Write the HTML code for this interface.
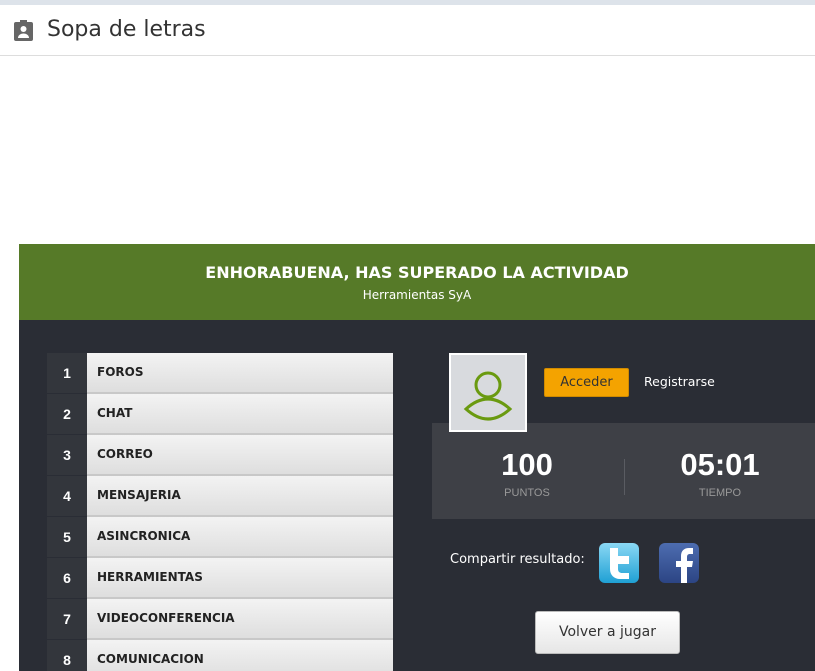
<!DOCTYPE html>
<html style="overflow:hidden;width:815px;height:671px"><head><meta charset="utf-8"><style>
*{margin:0;padding:0;box-sizing:border-box}
body{width:815px;height:671px;overflow:hidden;background:#fff;font-family:"DejaVu Sans","Liberation Sans",sans-serif;position:relative}
.top{position:absolute;left:0;top:0;width:815px;height:5px;background:#dde3ea}
.hdr{position:absolute;left:0;top:5px;width:815px;height:51px;border-bottom:1px solid #ddd;background:#fff}
.hdr span{position:absolute;left:47px;top:12px;font-size:22px;color:#333}
.green{position:absolute;left:19px;top:244px;width:796px;height:76px;background:#567a28;color:#fff;text-align:center}
.green h1{font-size:16px;font-weight:bold;margin-top:19px}
.green p{font-size:12px;margin-top:6px}
.dark{position:absolute;left:19px;top:320px;width:796px;height:351px;background:#2a2d35}
.row{position:absolute;left:47px;width:346px;height:41px}
.num{position:absolute;left:0;top:0;width:40px;height:41px;background:#33363c;color:#fff;font:bold 14px "Liberation Sans",sans-serif;text-align:center;line-height:41px;border-bottom:1px solid #2a2d35}
.txt{position:absolute;left:40px;top:0;width:306px;height:41px;background:linear-gradient(#f3f3f3,#dedede);border-bottom:2px solid #c8c8c8;font:bold 12px "DejaVu Sans",sans-serif;color:#222;line-height:39px;padding-left:10px}
.av{position:absolute;left:449px;top:353px;width:78px;height:79px;background:#d8dade;border:2px solid #fff}
.acc{position:absolute;left:544px;top:368px;width:85px;height:29px;background:#f4a300;border:1px solid #d08a00;border-radius:2px;color:#333;font-size:13px;text-align:center;line-height:27px}
.reg{position:absolute;left:644px;top:374px;color:#fff;font-size:12.5px}
.stats{position:absolute;left:432px;top:423px;width:383px;height:96px;background:#3e4046}
.big{position:absolute;color:#fff;font:bold 31px "Liberation Sans",sans-serif;text-align:center;width:190px;top:24px}
.lbl{position:absolute;color:#999;font:11px "Liberation Sans",sans-serif;text-align:center;width:190px;top:64px}
.sep{position:absolute;left:192px;top:36px;width:1px;height:36px;background:#5a5c62}
.share{position:absolute;left:450px;top:552px;color:#fff;font-size:13px}
.ic{position:absolute;top:543px;width:40px;height:40px;border-radius:6px}
.btn{position:absolute;left:535px;top:611px;width:145px;height:43px;background:linear-gradient(#fff,#e6e6e6);border:1px solid #bbb;border-radius:3px;color:#333;font-size:14px;text-align:center;line-height:41px}
</style></head><body>
<div class="top"></div>
<div class="hdr">
<svg style="position:absolute;left:14px;top:15px" width="20" height="22" viewBox="0 0 20 22"><rect x="0" y="2" width="19" height="19" rx="2" fill="#666"/><rect x="6" y="0" width="7" height="4" fill="#666"/><circle cx="9.5" cy="9" r="3" fill="#fff"/><path d="M4 18c0-3 3-4.5 5.5-4.5S15 15 15 18z" fill="#fff"/></svg>
<span>Sopa de letras</span></div>
<div class="green"><h1>ENHORABUENA, HAS SUPERADO LA ACTIVIDAD</h1><p>Herramientas SyA</p></div>
<div class="dark"></div>
<div class="row" style="top:353px"><div class="num">1</div><div class="txt">FOROS</div></div>
<div class="row" style="top:394px"><div class="num">2</div><div class="txt">CHAT</div></div>
<div class="row" style="top:435px"><div class="num">3</div><div class="txt">CORREO</div></div>
<div class="row" style="top:476px"><div class="num">4</div><div class="txt">MENSAJERIA</div></div>
<div class="row" style="top:517px"><div class="num">5</div><div class="txt">ASINCRONICA</div></div>
<div class="row" style="top:558px"><div class="num">6</div><div class="txt">HERRAMIENTAS</div></div>
<div class="row" style="top:599px"><div class="num">7</div><div class="txt">VIDEOCONFERENCIA</div></div>
<div class="row" style="top:640px"><div class="num">8</div><div class="txt">COMUNICACION</div></div>
<div class="stats"><div class="big" style="left:0">100</div><div class="lbl" style="left:0">PUNTOS</div><div class="sep"></div><div class="big" style="left:193px">05:01</div><div class="lbl" style="left:193px">TIEMPO</div></div>
<div class="av"><svg width="74" height="75" viewBox="0 0 74 75"><circle cx="37" cy="30" r="12" fill="none" stroke="#6a9a10" stroke-width="3"/><path d="M15 54Q37 34 59 54Q37 74 15 54Z" fill="none" stroke="#6a9a10" stroke-width="3"/></svg></div>
<div class="acc">Acceder</div>
<div class="reg">Registrarse</div>
<div class="share">Compartir resultado:</div>
<div class="ic" style="left:599px;background:linear-gradient(#8ad8f4,#1fa0d4)"><svg width="40" height="40"><path d="M11 5h8v8h11v8H19v5c0 3 2 4 4 4h7v6H21c-6 0-10-4-10-10z" fill="#fff"/></svg></div>
<div class="ic" style="left:659px;background:linear-gradient(#4d6db0,#2c4584)"><svg width="40" height="40"><path d="M22 40V24h-5v-6h5v-5c0-5 3-8 8-8h4v6h-3c-2 0-3 1-3 3v4h6l-1 6h-5v16z" fill="#fff"/></svg></div>
<div class="btn">Volver a jugar</div>
</body></html>
